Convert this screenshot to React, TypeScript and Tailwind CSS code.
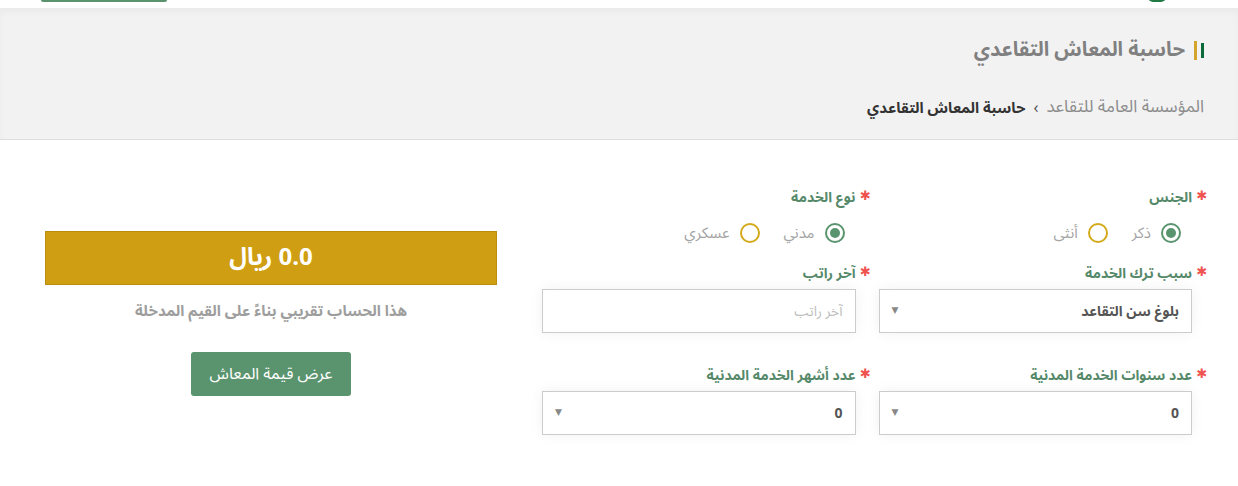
import { useState } from 'react';

const font = { fontFamily: '"Noto Sans Arabic", "DejaVu Sans", sans-serif' };

function Label({ text }: { text: string }) {
  return (
    <div className="flex items-center gap-1 h-5 text-[14px] font-bold text-[#55896a]">
      <span className="text-[#ef5350] text-[13px] w-[12px] text-center">✱</span>
      <span>{text}</span>
    </div>
  );
}

function Radio({ checked, label, onClick }: { checked: boolean; label: string; onClick: () => void }) {
  return (
    <button type="button" onClick={onClick} className="flex items-center gap-[10px]">
      <span
        className={`w-[20px] h-[20px] rounded-full border-2 flex items-center justify-center ${
          checked ? 'border-[#5a946e]' : 'border-[#d4aa1a]'
        }`}
      >
        {checked && <span className="w-[10px] h-[10px] rounded-full bg-[#5a946e]" />}
      </span>
      <span className="text-[15px] text-[#a3a3a3]">{label}</span>
    </button>
  );
}

function Select({ value }: { value: string }) {
  return (
    <div className="mr-[16px] h-[44px] bg-white border border-[#cccccc] shadow-[0_0_14px_rgba(0,0,0,0.06)] flex items-center justify-between px-3">
      <span className="text-[14px] font-bold text-[#555]">{value}</span>
      <span className="text-[9px] text-[#888]">▼</span>
    </div>
  );
}

export default function App() {
  const [gender, setGender] = useState('m');
  const [service, setService] = useState('civil');

  return (
    <div dir="rtl" style={font} className="w-[1238px] h-[486px] bg-white overflow-hidden">
      {/* top header remnant */}
      <div className="relative h-[8px] bg-white overflow-hidden">
        <div className="absolute left-[41px] top-0 w-[126px] h-[2px] bg-[#5a946e] rounded-b-[2px]" />
        <div className="absolute left-[1148px] top-[-8px] w-[18px] h-[10px] rounded-full bg-[#1f7a44]" />
      </div>

      {/* page title */}
      <div className="h-[132px] bg-[#f2f2f2] border-b border-[#dddddd] shadow-[inset_0_5px_6px_rgba(0,0,0,0.03)] pr-[34px] pt-[32px]">
        <div className="flex items-center gap-[9px]">
          <div className="flex items-center gap-[4px]">
            <span className="w-[3px] h-[15px] bg-[#0b6b3a]" />
            <span className="w-[3px] h-[19px] bg-[#d4a52a]" />
          </div>
          <h1 className="text-[20px] font-bold text-[#808080] leading-none">حاسبة المعاش التقاعدي</h1>
        </div>
        <div className="flex items-center gap-2 mt-[35px]">
          <span className="text-[#8c8c8c] text-[17px]">المؤسسة العامة للتقاعد</span>
          <span className="text-[#555] text-[16px]">›</span>
          <span className="font-bold text-[#333] text-[15px]">حاسبة المعاش التقاعدي</span>
        </div>
      </div>

      {/* content */}
      <div className="flex pr-[30px] pl-[45px] pt-[47px] gap-[45px]">
        <div className="w-[666px] grid grid-cols-2 gap-x-[7px]">
          <div>
            <Label text="الجنس" />
            <div className="flex gap-[24px] mr-[27px] mt-[16px] h-[20px]">
              <Radio checked={gender === 'm'} label="ذكر" onClick={() => setGender('m')} />
              <Radio checked={gender === 'f'} label="أنثى" onClick={() => setGender('f')} />
            </div>
          </div>
          <div>
            <Label text="نوع الخدمة" />
            <div className="flex gap-[24px] mr-[27px] mt-[16px] h-[20px]">
              <Radio checked={service === 'civil'} label="مدني" onClick={() => setService('civil')} />
              <Radio checked={service === 'mil'} label="عسكري" onClick={() => setService('mil')} />
            </div>
          </div>

          <div className="mt-[20px]">
            <Label text="سبب ترك الخدمة" />
            <div className="mt-[6px]">
              <Select value="بلوغ سن التقاعد" />
            </div>
          </div>
          <div className="mt-[20px]">
            <Label text="آخر راتب" />
            <div className="mt-[6px] mr-[16px] h-[44px] bg-white border border-[#cccccc] shadow-[0_0_14px_rgba(0,0,0,0.06)] flex items-center px-3">
              <span className="text-[14px] text-[#bdbdbd]">آخر راتب</span>
            </div>
          </div>

          <div className="mt-[32px]">
            <Label text="عدد سنوات الخدمة المدنية" />
            <div className="mt-[6px]">
              <Select value="0" />
            </div>
          </div>
          <div className="mt-[32px]">
            <Label text="عدد أشهر الخدمة المدنية" />
            <div className="mt-[6px]">
              <Select value="0" />
            </div>
          </div>
        </div>

        <div className="w-[452px] pt-[44px] flex flex-col items-center">
          <div className="w-full h-[54px] bg-[#d09e12] border border-[#bb8d0c] flex items-center justify-center">
            <span className="text-[24px] font-bold text-white">0.0 ريال</span>
          </div>
          <p className="mt-[15px] text-[15px] font-bold text-[#9d9d9d]">هذا الحساب تقريبي بناءً على القيم المدخلة</p>
          <button className="mt-[29px] w-[160px] h-[44px] rounded-[3px] bg-[#5a946e] text-white text-[16px]">
            عرض قيمة المعاش
          </button>
        </div>
      </div>
    </div>
  );
}
